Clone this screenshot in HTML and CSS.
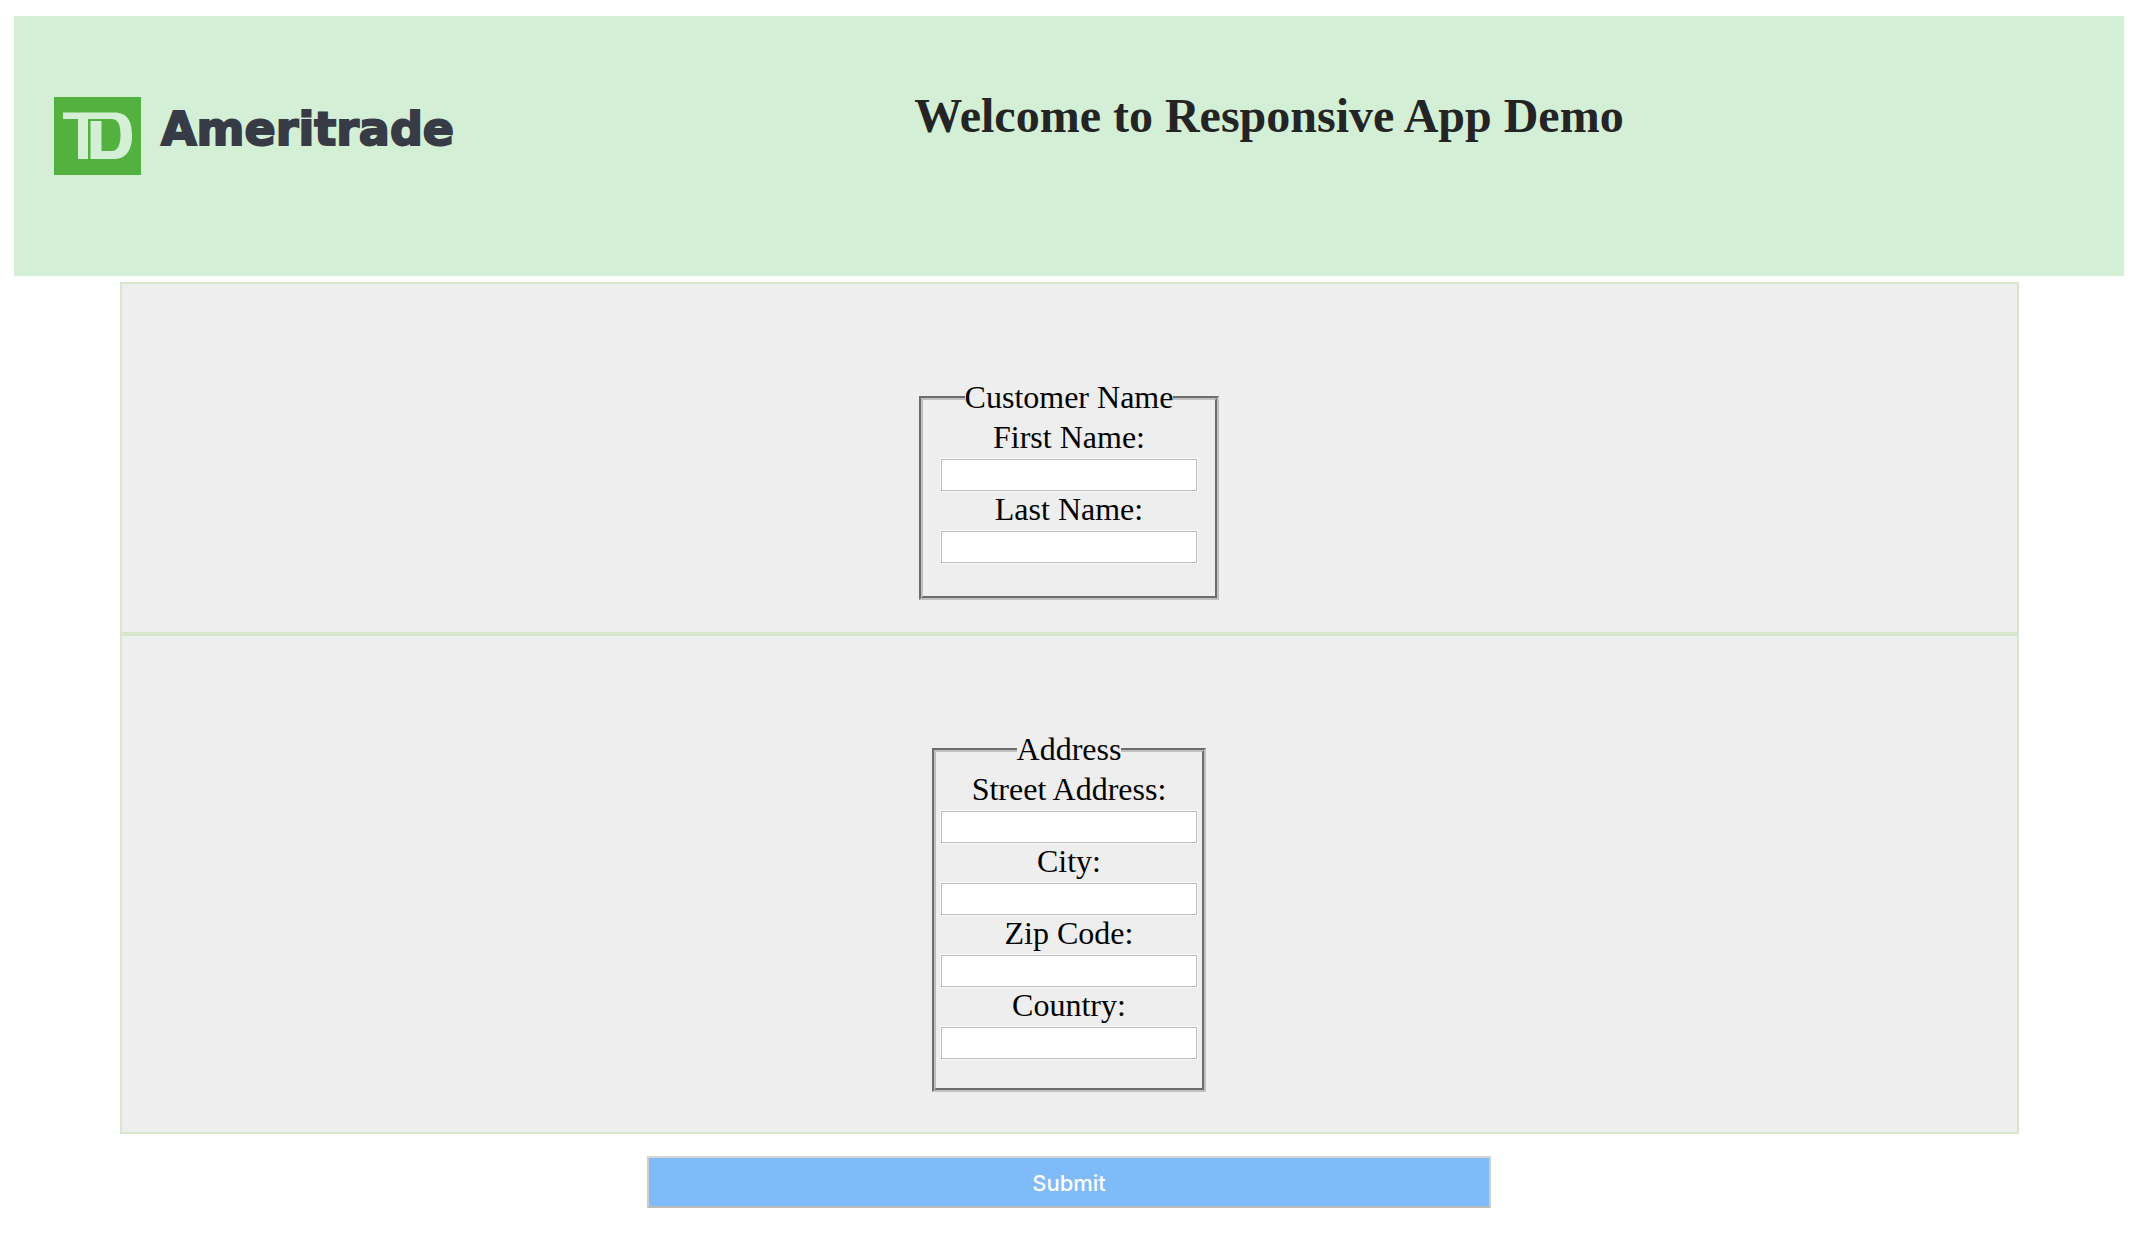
FILE: index.html
```html
<!DOCTYPE html>
<html lang="en">
<head>
<meta charset="utf-8">
<title>Responsive App Demo</title>
<meta name="viewport" content="width=device-width, initial-scale=1">
<link rel="stylesheet" href="styles.css">
</head>
<body>
<header class="banner">
  <div class="logo">
    <svg class="logo-mark" viewBox="0 0 87 78" aria-hidden="true">
      <path fill="#53b23f" d="M0 0H87V78H0Z"/>
      <path fill="#d3efd6" fill-rule="evenodd" d="M9 15.500H60C74 15.500 78 25 78 38.500C78 52 73 62 60 62H36.500V24H47.500V54H58C64 54 66.500 47 66.500 38C66.500 28 64.500 22 57 22H34V62H24V22H9Z"/>
    </svg>
    <span class="logo-name">Ameritrade</span>
  </div>
  <h1 class="title">Welcome to Responsive App Demo</h1>
</header>
<form class="form">
  <section class="panel panel-name">
    <fieldset class="group group-name">
      <legend>Customer Name</legend>
      <label for="first">First Name:</label>
      <input id="first" type="text">
      <label for="last">Last Name:</label>
      <input id="last" type="text">
    </fieldset>
  </section>
  <section class="panel panel-address">
    <fieldset class="group group-address">
      <legend>Address</legend>
      <label for="street">Street Address:</label>
      <input id="street" type="text">
      <label for="city">City:</label>
      <input id="city" type="text">
      <label for="zip">Zip Code:</label>
      <input id="zip" type="text">
      <label for="country">Country:</label>
      <input id="country" type="text">
    </fieldset>
  </section>
  <button class="submit" type="submit">Submit</button>
</form>
</body>
</html>
```
FILE: styles.css
```css
* {
  box-sizing: border-box;
}

body {
  margin: 16px 16px 16px 14px;
  background: #fff;
  color: #000;
  font-family: "Liberation Serif", "Times New Roman", serif;
  font-size: 32px;
}

.banner {
  display: flex;
  align-items: flex-start;
  min-height: 260px;
  padding: 72px 40px;
  background: #d3efd6;
}

.logo {
  display: flex;
  gap: 20px;
  width: 400px;
  padding-top: 9px;
}

.logo-mark {
  flex: none;
  width: 87px;
  height: 78px;
}

.logo-name {
  color: #363b46;
  font-family: "DejaVu Sans", Verdana, sans-serif;
  font-size: 46px;
  font-weight: 700;
  line-height: 64px;
  -webkit-text-stroke: 2px #363b46;
}

.title {
  flex: 1;
  margin: 0;
  color: #242424;
  font-size: 48px;
  font-weight: 700;
  line-height: 56px;
  text-align: center;
}

.form {
  display: flex;
  flex-direction: column;
  align-items: center;
  margin-top: 6px;
}

.panel {
  display: flex;
  justify-content: center;
  width: 90%;
  padding-top: 96px;
  border: 2px solid #d8e7cc;
  background: #eee;
}

.panel-name {
  padding-bottom: 32px;
}

.panel-address {
  padding-bottom: 40px;
}

.group {
  margin: 0;
  padding: 4px;
  border: 4px groove #c0c0c0;
  text-align: center;
}

.group-name {
  padding: 4px 17px 32px;
}

.group-address {
  padding-bottom: 28px;
}

legend {
  margin: 0 auto;
  padding: 0 0 2px;
  line-height: 34px;
}

label {
  display: block;
  line-height: 34px;
}

input {
  display: block;
  width: 256px;
  height: 32px;
  margin: 5px 1px 1px;
  padding: 2px 4px;
  border: 1px solid #bdbdbd;
  outline: 1px solid #fafafa;
  background: #fff;
  font-size: 22px;
}

.submit {
  width: 40%;
  height: 52px;
  margin-top: 22px;
  padding: 3px 6px 1px;
  border: 2px solid;
  border-color: #d6d6d6 #cecece #bababa;
  background: #80bbf9;
  color: #fff;
  font-family: Inter, sans-serif;
  font-size: 22px;
  font-weight: 500;
}
```
